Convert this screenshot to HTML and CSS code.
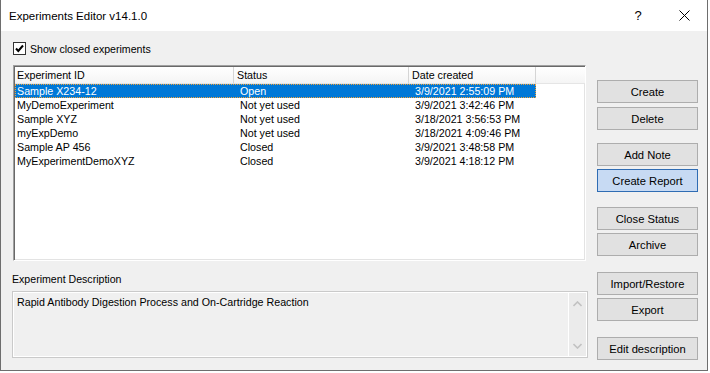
FILE: index.html
```html
<!DOCTYPE html>
<html>
<head>
<meta charset="utf-8">
<link rel="stylesheet" href="styles.css">
</head>
<body>
<div class="window">
  <div class="titlebar">
    <span class="title">Experiments Editor v14.1.0</span>
    <span class="tb-btn help">?</span>
    <span class="tb-btn close">
      <svg width="11" height="11" viewBox="0 0 11 11"><path d="M0.5 0.5 L10.5 10.5 M10.5 0.5 L0.5 10.5" stroke="#000" stroke-width="1" fill="none"/></svg>
    </span>
  </div>
  <div class="content">
    <div class="main">
      <div class="check">
        <span class="box"><svg width="11" height="11" viewBox="0 0 11 11"><path d="M2 5.5 L4.3 8 L9 2.5" stroke="#000" stroke-width="2" fill="none"/></svg></span>
        <span class="check-label">Show closed experiments</span>
      </div>
      <div class="list">
        <div class="lv-head">
          <div class="hc c1">Experiment ID</div>
          <div class="hc c2">Status</div>
          <div class="hc c3">Date created</div>
          <div class="hc c4"></div>
        </div>
        <div class="row selected">
          <div class="cell c1">Sample X234-12</div>
          <div class="cell c2">Open</div>
          <div class="cell c3">3/9/2021 2:55:09 PM</div>
        </div>
        <div class="row">
          <div class="cell c1">MyDemoExperiment</div>
          <div class="cell c2">Not yet used</div>
          <div class="cell c3">3/9/2021 3:42:46 PM</div>
        </div>
        <div class="row">
          <div class="cell c1">Sample XYZ</div>
          <div class="cell c2">Not yet used</div>
          <div class="cell c3">3/18/2021 3:56:53 PM</div>
        </div>
        <div class="row">
          <div class="cell c1">myExpDemo</div>
          <div class="cell c2">Not yet used</div>
          <div class="cell c3">3/18/2021 4:09:46 PM</div>
        </div>
        <div class="row">
          <div class="cell c1">Sample AP 456</div>
          <div class="cell c2">Closed</div>
          <div class="cell c3">3/9/2021 3:48:58 PM</div>
        </div>
        <div class="row">
          <div class="cell c1">MyExperimentDemoXYZ</div>
          <div class="cell c2">Closed</div>
          <div class="cell c3">3/9/2021 4:18:12 PM</div>
        </div>
      </div>
      <div class="desc-label">Experiment Description</div>
      <div class="desc">
        <div class="desc-text">Rapid Antibody Digestion Process and On-Cartridge Reaction</div>
        <div class="vscroll">
          <svg width="9" height="6" viewBox="0 0 9 6"><path d="M0.5 5 L4.5 1 L8.5 5" stroke="#c2c2c2" stroke-width="1.6" fill="none"/></svg>
          <svg width="9" height="6" viewBox="0 0 9 6"><path d="M0.5 1 L4.5 5 L8.5 1" stroke="#c2c2c2" stroke-width="1.6" fill="none"/></svg>
        </div>
      </div>
    </div>
    <div class="buttons">
      <div class="btn b-create">Create</div>
      <div class="btn b-delete">Delete</div>
      <div class="btn b-note">Add Note</div>
      <div class="btn b-report focus">Create Report</div>
      <div class="btn b-close">Close Status</div>
      <div class="btn b-archive">Archive</div>
      <div class="btn b-import">Import/Restore</div>
      <div class="btn b-export">Export</div>
      <div class="btn b-edit">Edit description</div>
    </div>
  </div>
</div>
</body>
</html>
```

FILE: styles.css
```css
* { box-sizing: border-box; }
body {
  margin: 0;
  background: #ffffff;
  font-family: "Liberation Sans", Arial, sans-serif;
  color: #000;
}
.window {
  width: 708px;
  height: 371px;
  border: 1px solid #6e6e6e;
  border-top: none;
  background: #f0f0f0;
  display: flex;
  flex-direction: column;
}
.titlebar {
  height: 31px;
  background: #ffffff;
  display: flex;
  align-items: center;
}
.title {
  flex: 1;
  margin-left: 8px;
  font-size: 11.5px;
}
.tb-btn {
  width: 46px;
  height: 31px;
  display: flex;
  align-items: center;
  justify-content: center;
}
.help {
  font-size: 13px;
}
.content {
  flex: 1;
  display: flex;
  padding-left: 11px;
}
.main {
  width: 576px;
  padding-top: 11px;
  display: flex;
  flex-direction: column;
}
.check {
  display: flex;
  align-items: center;
  height: 13px;
  margin-left: 1px;
}
.box {
  width: 13px;
  height: 13px;
  border: 1px solid #333;
  background: #fff;
  display: flex;
  align-items: center;
  justify-content: center;
}
.check-label {
  margin-left: 4px;
  font-size: 10.6px;
}
.list {
  margin: 10px 2px 0 1px;
  height: 196px;
  background: #fff;
  border-top: 1px solid #a0a0a0;
  border-left: 1px solid #a0a0a0;
  border-right: 1px solid #ffffff;
  border-bottom: 1px solid #ffffff;
  box-shadow: inset 1px 1px 0 #696969, inset -1px -1px 0 #e3e3e3;
  padding: 1px 0 0 1px;
  font-size: 10.7px;
  overflow: hidden;
}
.lv-head {
  display: flex;
  height: 17px;
  background: linear-gradient(#ffffff, #f4f4f4);
}
.hc {
  border-right: 1px solid #d5d5d5;
  border-bottom: 1px solid #e5e5e5;
  line-height: 16px;
  white-space: nowrap;
}
.hc.c1 { padding-left: 2px; }
.hc.c2, .hc.c3 { padding-left: 3px; }
.hc.c4 { flex: 1; border-right: none; }
.c1 { width: 219px; }
.c2 { width: 175px; }
.c3 { width: 127px; }
.row {
  display: flex;
  height: 14px;
  width: 521px;
}
.cell {
  line-height: 14px;
  white-space: nowrap;
}
.cell.c1 { padding-left: 2px; }
.cell.c2 { padding-left: 6px; }
.cell.c3 { padding-left: 6px; }
.row.selected {
  background: #0078d7;
  color: #fff;
  outline: 1px dotted #f2a33a;
  outline-offset: -1px;
}
.desc-label {
  margin-top: 11px;
  font-size: 10.6px;
  line-height: 14px;
}
.desc {
  margin-top: 5px;
  height: 67px;
  border: 1px solid #cacaca;
  box-shadow: inset 0 0 0 1px #ffffff;
  background: #f0f0f0;
  display: flex;
}
.desc-text {
  flex: 1;
  padding: 3px 0 0 4px;
  font-size: 10.7px;
  line-height: 14px;
}
.vscroll {
  width: 18px;
  margin: 1px 1px 1px 0;
  border-left: 1px solid #ffffff;
  background: #ebebeb;
  display: flex;
  flex-direction: column;
  align-items: center;
  justify-content: space-between;
  padding: 8px 0 7px;
}
.buttons {
  width: 101px;
  margin-left: 9px;
  display: flex;
  flex-direction: column;
}
.btn {
  height: 23px;
  border: 1px solid #adadad;
  background: #e1e1e1;
  display: flex;
  align-items: center;
  justify-content: center;
  font-size: 11.2px;
}
.btn.focus {
  background: #c7daf3;
  border-color: #2f6cb3;
}
.b-create { margin-top: 49px; }
.b-delete { margin-top: 4px; }
.b-note { margin-top: 13px; }
.b-report { margin-top: 3px; }
.b-close { margin-top: 15px; }
.b-archive { margin-top: 3px; }
.b-import { margin-top: 16px; }
.b-export { margin-top: 3px; }
.b-edit { margin-top: 16px; }
```
